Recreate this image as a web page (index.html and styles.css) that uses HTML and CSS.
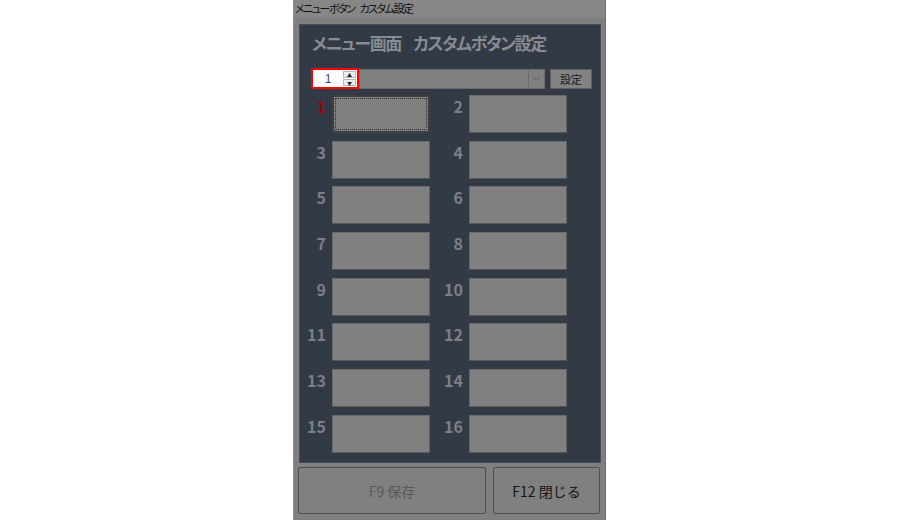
FILE: index.html
```html
<!DOCTYPE html>
<html lang="ja">
<head>
  <meta charset="UTF-8" />
  <title>メニューボタン カスタム設定</title>
  <link rel="stylesheet" href="styles.css">
</head>
<body>

<div class="window">
  <div class="titlebar">メニューボタン<span class="tsp"></span>カスタム設定</div>

  <div class="panel">
    <h1 class="heading">メニュー画面<span class="sp"></span>カスタムボタン設定</h1>

    <div class="toolbar">
      <div class="spinner">
        <input type="text" class="spin-value" value="1" />
        <div class="spin-btns">
          <span class="spin-btn">▲</span>
          <span class="spin-btn">▼</span>
        </div>
      </div>
      <div class="combo">
        <span class="combo-text"></span>
        <span class="combo-arrow">
          <svg width="9" height="6" viewBox="0 0 9 6"><path d="M1 1 L4.5 4.5 L8 1" fill="none" stroke="#5c5c5c" stroke-width="1"/></svg>
        </span>
      </div>
      <button class="set-btn">設定</button>
    </div>

    <div class="grid" id="grid"></div>
  </div>

  <div class="footer">
    <button class="foot-btn save" disabled>F9 保存</button>
    <button class="foot-btn close">F12 閉じる</button>
  </div>
</div>

<script>
  const grid = document.getElementById("grid");
  for (let i = 1; i <= 16; i++) {
    const cell = document.createElement("div");
    cell.className = "cell";

    const num = document.createElement("span");
    num.className = "num" + (i === 1 ? " active" : "");
    num.textContent = i;

    const btn = document.createElement("button");
    btn.className = "slot" + (i === 1 ? " focused" : "");

    cell.append(num, btn);
    grid.appendChild(cell);
  }
</script>
</body>
</html>
```

FILE: styles.css
```css
* { box-sizing: border-box; }

body {
  margin: 0;
  background: #fff;
  font-family: "Noto Sans CJK JP", "Noto Sans", sans-serif;
}

.window {
  width: 313px;
  height: 520px;
  margin-left: 293px;
  background: #7f7f7f;
  border-left: 1px solid #8c8c8c;
  border-right: 1px solid #6e6e6e;
}

.titlebar {
  height: 18px;
  padding: 1px 0 0 1px;
  background: #878787;
  font-size: 11px;
  line-height: 14px;
  letter-spacing: -1.5px;
  font-feature-settings: "palt";
  color: #111;
  white-space: nowrap;
}

.titlebar .tsp {
  display: inline-block;
  width: 5px;
}

.panel {
  margin: 6px 4px 0 5px;
  height: 439px;
  padding: 6px 0 0 6px;
  background: #323a46;
  border: 1px solid #454c57;
}

.heading {
  margin: 0 0 0 6px;
  font-size: 17px;
  line-height: 24px;
  font-weight: bold;
  letter-spacing: -1.3px;
  color: #888b91;
  font-feature-settings: "palt";
  white-space: nowrap;
}

.heading .sp {
  display: inline-block;
  width: 12px;
}

.toolbar {
  display: flex;
  align-items: center;
  margin: 13px 0 0 5px;
  height: 21px;
}

.spinner {
  display: flex;
  width: 48px;
  height: 21px;
  border: 2px solid #f00;
  background: #fff;
}

.spin-value {
  width: 30px;
  border: none;
  padding: 0;
  font: 12px "Liberation Sans", sans-serif;
  text-align: center;
  color: #3d4a66;
  background: #fff;
  outline: none;
}

.spin-btns {
  display: flex;
  flex-direction: column;
  gap: 1px;
  padding: 1px 0;
}

.spin-btn {
  width: 13px;
  height: 7px;
  border: 1px solid #b5b5b5;
  background: #ececec;
  font-size: 5px;
  line-height: 5px;
  text-align: center;
  color: #222;
}

.combo {
  display: flex;
  width: 186px;
  height: 20px;
  background: #808080;
  border: 1px solid #6c6c6c;
}

.combo-text { flex-grow: 1; }

.combo-arrow {
  width: 16px;
  display: flex;
  align-items: center;
  justify-content: center;
  border-left: 1px solid #6c6c6c;
}

.set-btn {
  margin-left: 5px;
  width: 42px;
  height: 20px;
  padding: 0;
  background: #838383;
  border: 1px solid #5e5e5e;
  font-family: "Noto Sans CJK JP", sans-serif;
  font-size: 11px;
  color: #1a1a1a;
}

.grid {
  display: grid;
  grid-template-columns: 124px 124px;
  column-gap: 13px;
  row-gap: 7.7px;
  margin-top: 6px;
}

.cell {
  display: flex;
  gap: 6px;
}

.num {
  width: 20px;
  padding-top: 1px;
  text-align: right;
  font-size: 16px;
  line-height: 20px;
  font-weight: bold;
  color: #7b7f87;
}

.num.active { color: #8f0a0a; }

.slot {
  width: 98px;
  height: 38px;
  padding: 0;
  background: #808080;
  border: 1px solid #6a6a6a;
  border-bottom-color: #575757;
  border-right-color: #606060;
}

.slot.focused {
  border: 2px solid #3e3e3e;
  outline: 1px dotted #2a2a2a;
  outline-offset: -4px;
}

.footer {
  display: flex;
  gap: 7px;
  margin: 4px 0 0 4px;
}

.foot-btn {
  height: 47px;
  background: #808080;
  border: 1px solid #4f4f4f;
  border-radius: 2px;
  font-family: "Noto Sans CJK JP", sans-serif;
  font-size: 14px;
}

.save {
  width: 188px;
  color: #5a5a5a;
}

.close {
  width: 107px;
  color: #151515;
}
```
